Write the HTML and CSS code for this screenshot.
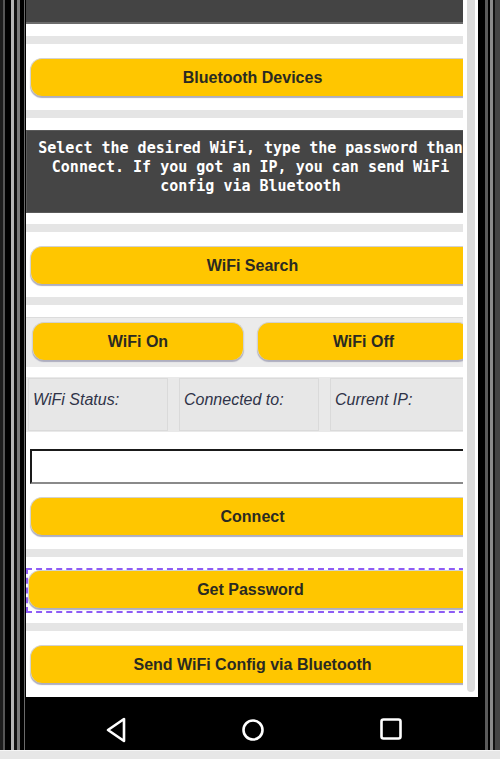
FILE: index.html
```html
<!DOCTYPE html>
<html lang="en">
<head>
    <meta charset="UTF-8">
    <meta name="viewport" content="width=device-width, initial-scale=1.0">
    <title>WiFi Setup</title>
    <link rel="stylesheet" href="styles.css">
</head>
<body>
    <div class="device">
        <div class="frame-left"></div>
        <div class="screen">
            <div class="view">
                <div class="page">
                    <div class="content">
                        <div class="topbar"></div>
                        <div class="sep"></div>
                        <button class="btn first">Bluetooth Devices</button>
                        <div class="sep"></div>
                        <div class="info">
                            Select the desired WiFi, type the password than<br>
                            Connect. If you got an IP, you can send WiFi<br>
                            config via Bluetooth
                        </div>
                        <div class="sep after-info"></div>
                        <button class="btn first">WiFi Search</button>
                        <div class="sep after-search"></div>
                        <div class="toggle-row">
                            <button class="btn small">WiFi On</button>
                            <button class="btn small">WiFi Off</button>
                        </div>
                        <div class="status">
                            <div class="cell">WiFi Status:</div>
                            <div class="cell">Connected to:</div>
                            <div class="cell">Current IP:</div>
                        </div>
                        <input class="pass" type="text">
                        <button class="btn connect">Connect</button>
                        <div class="sep"></div>
                        <div class="focus-box">
                            <button class="btn inner">Get Password</button>
                        </div>
                        <div class="sep after-focus"></div>
                        <button class="btn first">Send WiFi Config via Bluetooth</button>
                    </div>
                </div>
                <div class="scrollbar"><div class="thumb"></div></div>
            </div>
            <div class="navbar">
                <svg width="20" height="26" viewBox="0 0 20 26">
                    <polygon points="18,2 18,24 2,13" fill="none" stroke="#fff" stroke-width="2.6" stroke-linejoin="round"/>
                </svg>
                <svg width="22" height="26" viewBox="0 0 22 26">
                    <circle cx="11" cy="13" r="9.5" fill="none" stroke="#fff" stroke-width="2.6"/>
                </svg>
                <svg width="22" height="26" viewBox="0 0 22 26">
                    <rect x="1.5" y="2.5" width="19" height="19" rx="2" fill="none" stroke="#fff" stroke-width="2.6"/>
                </svg>
            </div>
        </div>
        <div class="frame-right"></div>
    </div>
    <div class="floor"></div>
</body>
</html>
```

FILE: styles.css
```css
body {
    margin: 0;
    background-color: #e7e7e7;
    font-family: "Liberation Sans", Arial, sans-serif;
}
.device {
    display: flex;
    height: 750px;
}
.frame-left {
    width: 26px;
    background: linear-gradient(to right, #1c1c1c 0 3px, #555 3px 5px, #000 5px 11px, #b5b5b5 11px 14px, #111 14px 17px, #7a7a7a 17px 20px, #000 20px 24px, #6a6a6a 24px 25px, #000 25px);
}
.frame-right {
    width: 22px;
    background: linear-gradient(to right, #000 0 7px, #5a5a5a 7px 10px, #000 10px 12px, #8a8a8a 12px 15px, #111 15px 17px, #444 17px);
}
.screen {
    width: 452px;
    display: flex;
    flex-direction: column;
    background-color: #fff;
}
.view {
    height: 697px;
    display: flex;
}
.page {
    width: 437px;
    overflow: hidden;
}
.content {
    width: 449px;
}
.scrollbar {
    width: 15px;
    padding: 0 3px 0 4px;
    box-sizing: border-box;
}
.thumb {
    height: 692px;
    background-color: #dcdcdc;
    border-radius: 0 0 4px 4px;
}
.navbar {
    flex: 1;
    background-color: #000;
    display: flex;
    align-items: flex-start;
    gap: 116px;
    padding: 20px 0 0 80px;
}
.floor {
    height: 9px;
    border-top: 1px solid #f6f6f6;
    box-sizing: border-box;
}

.topbar {
    height: 22px;
    background-color: #444;
    border-bottom: 2px solid #6c6c6c;
}
.sep {
    height: 8px;
    margin-top: 14px;
    background-color: #e5e5e5;
}
.topbar + .sep {
    margin-top: 12px;
}
.sep.after-info {
    margin-top: 11px;
}
.sep.after-search {
    margin-top: 13px;
}
.sep.after-focus {
    margin-top: 10px;
}

.btn {
    display: block;
    box-sizing: border-box;
    height: 38px;
    width: 445px;
    margin: 14px 0 0 4px;
    padding: 0;
    background-color: #ffc600;
    border: 1px solid #d2d2d2;
    border-bottom: none;
    border-radius: 12px;
    box-shadow: 0 2px 1px #aeaebf;
    font-family: "Liberation Sans", Arial, sans-serif;
    font-weight: bold;
    font-size: 16px;
    color: #2a2a22;
    cursor: pointer;
}

.info {
    margin-top: 12px;
    padding: 8px 0 16px;
    background-color: #454545;
    border: 1px solid #5a5a5a;
    color: #fff;
    font-family: "DejaVu Sans Mono", monospace;
    font-weight: bold;
    font-size: 15px;
    line-height: 19px;
    text-align: center;
    white-space: nowrap;
}

.toggle-row {
    margin-top: 12px;
    display: grid;
    grid-template-columns: 212px 213px;
    column-gap: 13px;
    padding: 4px 0 7px 6px;
    background-color: #ebebeb;
    border-top: 1px solid #dcdcdc;
}
.btn.small {
    width: auto;
    margin: 0;
}

.status {
    margin-top: 10px;
    display: grid;
    grid-template-columns: repeat(3, 140px);
    column-gap: 11px;
    padding: 1px 0 1px 2px;
    background-color: #e9e9e9;
}
.cell {
    height: 53px;
    box-sizing: border-box;
    padding: 12px 4px 0;
    border: 1px solid #dadada;
    background-color: #e7e7e7;
    font-style: italic;
    font-size: 16px;
    line-height: 18px;
    color: #2f3347;
}

.pass {
    display: block;
    box-sizing: border-box;
    width: 445px;
    height: 35px;
    margin: 17px 0 0 4px;
    border: 2px solid;
    border-color: #1a1a1a #8a8a8a #8a8a8a #1a1a1a;
    background-color: #fff;
}
.btn.connect {
    margin-top: 13px;
}

.focus-box {
    margin-top: 11px;
    padding-bottom: 3px;
    border: 2px dashed #8d5cf5;
}
.btn.inner {
    width: 100%;
    margin: 0;
}
```
